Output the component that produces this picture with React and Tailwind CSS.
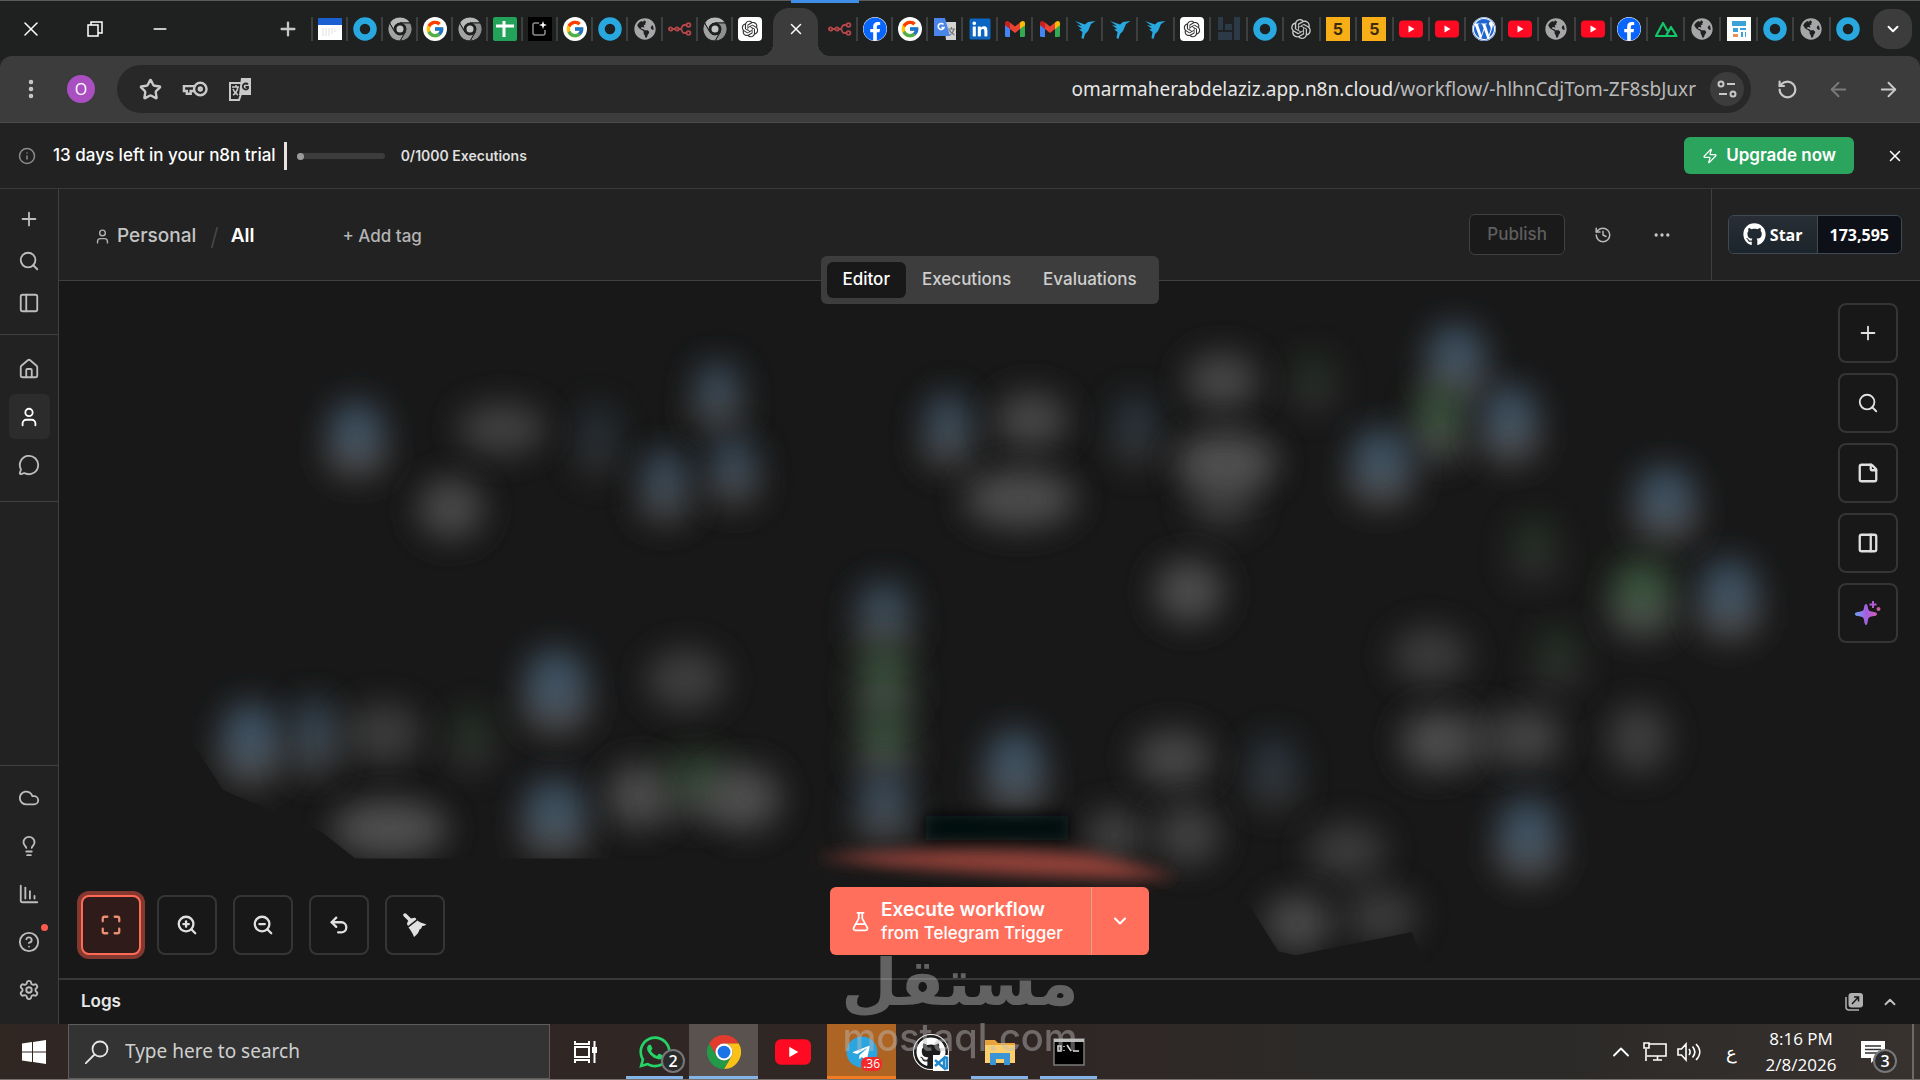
import React from "react";
import {
    ArrowLeft, ArrowRight, ChartColumnDecreasing, ChevronDown, ChevronUp, CircleHelp, Cloud, Ellipsis, EllipsisVertical,
    FlaskConical, History, House, Info, Lightbulb, Maximize, MessageCircle, Minus, PanelLeft, PanelRight, Plus,
    RotateCcw, Search, Settings, Star, StickyNote, Undo2, User, X, Zap, ZoomIn, ZoomOut,
} from "lucide-react";
import { FaFacebook, FaGithub, FaGlobeAmericas, FaLinkedin, FaTelegram, FaWhatsapp, FaWordpress } from "react-icons/fa";
import { FcGoogle } from "react-icons/fc";
import { RiOpenaiFill } from "react-icons/ri";

const UI_FONT = "font-['Inter','Liberation_Sans',sans-serif]";
const OS_FONT = "font-['Open_Sans','Noto_Sans',sans-serif]";

/* ---------- Favicons ---------- */

const Ring = () => (
    <svg viewBox="0 0 24 24" className="size-6"><circle cx="12" cy="12" r="8.5" fill="none" stroke="#29a8e0" strokeWidth="6.5" /></svg>
);

const ChromeLogo = ({ grey, className = "size-6" }) => {
    const [red, yellow, green, mid, dot] = grey
        ? ["#b8b8b8", "#8f8f8f", "#a2a2a2", "#1f2120", "#c4c4c4"]
        : ["#e33b2e", "#fbc116", "#229a48", "#ffffff", "#1b73e8"];
    return (
        <svg viewBox="0 0 48 48" className={className}>
            <g stroke={grey ? "#1f2120" : "none"} strokeWidth="2">
                <path fill={red} d="M3.2 12A24 24 0 0 1 44.8 12H24A12 12 0 0 0 13.6 30Z" />
                <path fill={yellow} d="M44.8 12A24 24 0 0 1 24 48L34.4 30A12 12 0 0 0 24 12Z" />
                <path fill={green} d="M24 48A24 24 0 0 1 3.2 12L13.6 30A12 12 0 0 0 34.4 30Z" />
            </g>
            <circle cx="24" cy="24" r="12" fill={mid} />
            <circle cx="24" cy="24" r={grey ? 7 : 9} fill={dot} />
        </svg>
    );
};

const Calendar = () => (
    <svg viewBox="0 0 24 24" className="size-6">
        <path fill="#fff" d="M0 1h24v22H0z" />
        <path fill="#1b5fd0" d="M0 1h24v7H0z" />
        <path stroke="#e3dede" strokeDasharray="2 1" d="M4 12h13M4 14h14M4 16h12M4 18h9" />
    </svg>
);

const Google = () => <span className="flex size-6 items-center justify-center rounded-full bg-white"><FcGoogle className="size-5" /></span>;

const Sheets = () => (
    <svg viewBox="0 0 24 24" className="size-6">
        <rect width="24" height="24" rx="2" fill="#23a25a" />
        <path stroke="#fff" strokeWidth="3" d="M11 4v16M3 9h18" />
    </svg>
);

const BlackApp = () => (
    <svg viewBox="0 0 24 24" className="size-6">
        <path fill="#000" d="M0 0h24v24H0z" />
        <path fill="none" stroke="#8d8d8d" strokeWidth="1.5" d="M11 6H7a2 2 0 0 0-2 2v8a2 2 0 0 0 2 2h8a2 2 0 0 0 2-2v-3" />
        <path fill="#fff" d="M15 4l1 3 3 1-3 1-1 3-1-3-3-1 3-1z" />
    </svg>
);

const Globe = () => <FaGlobeAmericas className="size-[22px] text-[#a6a6a8]" />;

const N8n = () => (
    <svg viewBox="0 0 24 24" className="size-6" fill="none" stroke="#b5474a" strokeWidth="1.8">
        <circle cx="2.6" cy="12" r="1.7" /><circle cx="9" cy="12" r="1.7" />
        <circle cx="20.5" cy="8" r="1.9" /><circle cx="20.5" cy="16" r="1.9" />
        <path d="M4.3 12h3M10.8 12h1.6c2 0 1-4 3.6-4h2.6M12.4 12c2 0 1 4 3.6 4h2.6" />
    </svg>
);

const GptCard = () => <span className="flex size-6 items-center justify-center rounded-sm bg-white"><RiOpenaiFill className="size-5 text-[#333]" /></span>;
const GptPlain = () => <RiOpenaiFill className="size-6 text-[#c9c9c9]" />;
const Facebook = () => <FaFacebook className="size-6 rounded-full bg-white text-[#0866ff]" />;

const Translate = () => (
    <svg viewBox="0 0 24 24" className="size-6">
        <path fill="#d4d4d4" d="M11 5h12v18H13z" />
        <path fill="#4a86ea" d="M1 1h11l5 18H1z" />
        <path fill="none" stroke="#fff" strokeWidth="1.6" d="M10.500 7.500a3 3 0 1 0 .5 3H8.500" />
        <path fill="none" stroke="#777" strokeWidth="1.200" d="M15 12h7M18.500 10v2M21 12c-1 4-3 5-4 6M16.500 13c1 3 3 4 5 5" />
    </svg>
);

const LinkedIn = () => <FaLinkedin className="size-6 text-[#0a66c2] [background:linear-gradient(white,white)_center/70%_70%_no-repeat]" />;

const Gmail = () => (
    <svg viewBox="0 0 24 24" className="size-6">
        <path fill="#4285f4" d="M2 7l5 4v9H3.500A1.500 1.500 0 0 1 2 18.500z" />
        <path fill="#34a853" d="M22 7l-5 4v9h3.500a1.500 1.500 0 0 0 1.500-1.500z" />
        <path fill="#ea4335" d="M7 5.500l5 4 5-4V12l-5 4-5-4z" />
        <path fill="#c5221f" d="M2 6.500C2 4 4.500 3.500 6 4.700l1 .8V12L2 8.200z" />
        <path fill="#fbbc04" d="M22 6.500c0-2.500-2.500-3-4-1.800l-1 .8V12l5-3.800z" />
    </svg>
);

const Bird = () => (
    <svg viewBox="0 0 24 24" className="size-6" fill="#29a8e0">
        <path d="M2 4l10 3.500 3-2.500 7.500-1-4.500 3-3 7-3 3-1.500 5-2-1 1-6-3.500-2.500L9 12 4 8l5 1z" />
    </svg>
);

const Bars = () => (
    <svg viewBox="0 0 24 24" className="size-6" fill="#2b3a46">
        <path d="M1 0h5v13H1zM1 15h14v8H1zM8 7h7v6H8zM17 0h6v23h-6z" />
    </svg>
);

const Five = () => <span className="flex size-6 items-center justify-center bg-[#f8ae17] text-base font-bold text-[#3d2c0c]">5</span>;

const YouTube = ({ className = "size-6" }) => (
    <svg viewBox="0 0 24 24" className={className}>
        <rect y="3.500" width="24" height="17" rx="4" fill="#ff0a23" />
        <path fill="#fff" d="M9.500 8.500l6 3.500-6 3.500z" />
    </svg>
);

const WordPress = () => <FaWordpress className="size-6 rounded-full bg-white text-[#1f66d1]" />;

const Nuxt = () => (
    <svg viewBox="0 0 24 24" className="size-6" fill="none" stroke="#12c66a" strokeWidth="2.200" strokeLinejoin="round">
        <path d="M12 19H2L9 6l4.500 8M12 19l5-9 5.500 9z" />
    </svg>
);

const WebPage = () => (
    <svg viewBox="0 0 24 24" className="size-6">
        <path fill="#fff" d="M0 0h24v24H0z" />
        <path fill="#3ba1d8" d="M5 4h14v5H5zM6 11h5v4H6zM13 11h6v2h-6zM14 15h2v5h-2zM18 15h1v5h-1z" />
        <path fill="#e0935b" d="M6 17h5v3H6z" />
    </svg>
);

const ChromeGrey = () => <ChromeLogo grey />;

const tabsLeft = [Calendar, Ring, ChromeGrey, Google, ChromeGrey, Sheets, BlackApp, Google, Ring, Globe, N8n, ChromeGrey, GptCard];
const tabsMid = [Facebook, Google, Translate, LinkedIn, Gmail, Gmail, Bird, Bird, Bird];
const tabsRight = [GptCard, Bars, Ring, GptPlain, Five, Five, YouTube, YouTube, WordPress, YouTube, Globe, YouTube, Facebook, Nuxt, Globe, WebPage, Ring, Globe, Ring];

const Tab = ({ icon: Icon, className = "w-[35px] shrink-0" }) => (
    <button aria-label="Tab" className={`flex h-6 items-center ${className}`}>
        <span className="h-6 w-0.5 bg-[#3e3f3f]" />
        <span className="flex flex-1 justify-center"><Icon /></span>
    </button>
);

/* ---------- Browser ---------- */

const TabStrip = () => (
    <div className="relative flex h-14 items-center border-t border-[#5a5c5b] bg-[#1f2120] text-white">
        <div className="absolute -top-px left-[791px] h-[3px] w-[68px] bg-[#3f8fe8]" />
        <button aria-label="Close" className="flex w-[62px] justify-center"><X className="size-6" strokeWidth={1.500} /></button>
        <button aria-label="Restore" className="flex w-[66px] justify-center">
            <svg viewBox="0 0 16 16" className="size-4" fill="none" stroke="currentColor" strokeWidth="1.500"><path d="M1 4h10v11H1zM4 4V1h11v11h-4" /></svg>
        </button>
        <button aria-label="Minimize" className="flex w-16 justify-center"><Minus className="size-5" strokeWidth={1.800} /></button>
        <button aria-label="New tab" className="ml-[85px] mr-3 text-[#c7c7c7]"><Plus className="size-[22px]" strokeWidth={2.500} /></button>
        {tabsLeft.map((icon, i) => <Tab key={i} icon={icon} />)}
        <div className="relative ml-[7px] flex h-12 w-[45px] shrink-0 items-center justify-center self-end rounded-t-2xl bg-[#3c3c3c] pb-1.5">
            <span className="absolute bottom-0 right-full size-3 bg-[radial-gradient(circle_at_0_0,transparent_12px,#3c3c3c_12px)]" />
            <span className="absolute bottom-0 left-full size-3 bg-[radial-gradient(circle_at_100%_0,transparent_12px,#3c3c3c_12px)]" />
            <button aria-label="Close tab"><X className="size-[18px]" /></button>
        </div>
        <button aria-label="Tab" className="ml-2.5 mr-1 flex w-6 shrink-0"><N8n /></button>
        {tabsMid.map((icon, i) => <Tab key={i} icon={icon} />)}
        <div className="flex min-w-0 flex-1 pl-0.5">
            {tabsRight.map((icon, i) => <Tab key={i} icon={icon} className="min-w-0 flex-1" />)}
        </div>
        <button aria-label="Search tabs" className="mx-2 flex h-10 w-[39px] shrink-0 items-center justify-center rounded-2xl bg-[#3c3c3c]"><ChevronDown className="size-[18px]" strokeWidth={2.500} /></button>
    </div>
);

const Toolbar = () => (
    <div className="bg-[#1f2120]">
        <div className="flex h-[67px] items-center rounded-t-xl border-b border-[#4a4a4a] bg-[#3c3c3c] text-[#c9c9c9]">
            <button aria-label="Menu" className="flex w-[62px] justify-center"><EllipsisVertical className="size-6" strokeWidth={2.500} /></button>
            <button aria-label="Profile" className={`mr-[22px] ml-[5px] flex size-7 items-center justify-center rounded-full bg-[#a94fc2] text-base text-white ${OS_FONT}`}>O</button>
            <div className="flex h-12 flex-1 items-center rounded-full bg-[#282828] pl-[22px] pr-[7px]">
                <button aria-label="Bookmark" className="mr-5"><Star className="size-[23px]" strokeWidth={2.500} /></button>
                <button aria-label="Passwords" className="mr-5">
                    <svg viewBox="0 0 27 18" className="h-[18px] w-[26px]" fill="none" stroke="currentColor" strokeWidth="2.500">
                        <circle cx="19" cy="9" r="6.500" /><circle cx="19" cy="9" r="1.500" />
                        <path d="M13 6H2v5h3v3h4v-3h4" />
                    </svg>
                </button>
                <button aria-label="Translate page">
                    <svg viewBox="0 0 24 24" className="size-6">
                        <path fill="#c9c9c9" d="M13 1h10v17H11z" />
                        <path fill="none" stroke="#c9c9c9" strokeWidth="2" d="M13 6H2v17h9l2-6" />
                        <path fill="none" stroke="#c9c9c9" strokeWidth="1.500" d="M4 10h7M8 8v2M10 10c-1 5-3 7-5 8M5 12c1 3 3 5 5 6" />
                        <path fill="none" stroke="#282828" strokeWidth="1.800" d="M20 7.500a3 3 0 1 0 0 4V10h-2.500" />
                    </svg>
                </button>
                <p className="ml-auto font-['Noto_Sans','Open_Sans',sans-serif] text-[19px] text-[#b9b9b9]">
                    <span className="text-[#e6e6e6]">omarmaherabdelaziz.app.n8n.cloud</span>/workflow/-hlhnCdjTom-ZF8sbJuxr
                </p>
                <button aria-label="Site information" className="ml-3.5 flex size-[34px] items-center justify-center rounded-full bg-[#3c3c3c]">
                    <svg viewBox="0 0 20 20" className="size-5" fill="none" stroke="currentColor" strokeWidth="2"><circle cx="4" cy="5" r="2.500" /><circle cx="16" cy="15" r="2.500" /><path d="M10 5h8M2 15h8" /></svg>
                </button>
            </div>
            <button aria-label="Reload" className="ml-[26px]"><RotateCcw className="size-[21px]" strokeWidth={2.500} /></button>
            <button aria-label="Forward" className="ml-[29px] text-[#7a7a7a]"><ArrowLeft className="size-[23px]" /></button>
            <button aria-label="Back" className="ml-[27px] mr-5"><ArrowRight className="size-[23px]" /></button>
        </div>
    </div>
);

/* ---------- n8n ---------- */

const TrialBanner = () => (
    <div className="flex h-[66px] items-center border-b border-[#3a3a3a] bg-[#222222] text-white">
        <Info className="ml-[18px] size-[18px] text-[#8c8c8c]" />
        <p className="ml-[17px] text-[17px] font-medium">13 days left in your n8n trial</p>
        <span className="ml-2 h-7 w-[3px] bg-[#e8e3dd]" />
        <div role="progressbar" aria-label="Executions used" aria-valuenow={0} aria-valuemax={1000} className="ml-2.5 h-1.5 w-22 rounded-full bg-[#3c3c3c]">
            <span className="block size-[7px] rounded-full bg-[#9b9b9b]" />
        </div>
        <p className="ml-4 text-sm font-semibold text-[#dedede]">0/1000 Executions</p>
        <button className="ml-auto flex h-[37px] items-center gap-2 rounded-md bg-[#2ba45e] px-[18px] text-[17px] font-semibold">
            <Zap className="size-4" strokeWidth={1.800} />
            Upgrade now
        </button>
        <button aria-label="Dismiss" className="ml-8 mr-4"><X className="size-[18px]" /></button>
    </div>
);

const SideButton = ({ icon: Icon, label, active, dot, className = "h-[45px]" }) => (
    <button aria-label={label} className={`relative flex w-[41px] items-center justify-center rounded-md ${className} ${active ? "bg-[#2c2c2c] text-white" : "text-[#bdbdbd]"}`}>
        <Icon className="size-[22px]" strokeWidth={2} />
        {dot && <span className="absolute right-[2px] top-[5px] size-[7px] rounded-full bg-[#ff5a4d]" />}
    </button>
);

const Sidebar = () => (
    <aside className="flex w-[59px] shrink-0 flex-col border-r border-[#404040] bg-[#222222]">
        <div className="flex h-[146px] flex-col items-center border-b border-[#404040] pt-[9px]">
            <SideButton icon={Plus} label="Create" className="h-[42px]" />
            <SideButton icon={Search} label="Search" className="h-[42px]" />
            <SideButton icon={PanelLeft} label="Toggle sidebar" className="h-[42px]" />
        </div>
        <div className="flex h-[167px] flex-col items-center gap-[3px] border-b border-[#404040] pt-[11px]">
            <SideButton icon={House} label="Overview" />
            <SideButton icon={User} label="Personal" active />
            <SideButton icon={MessageCircle} label="Chat" />
        </div>
        <div className="mt-auto flex flex-col items-center gap-[3px] border-t border-[#404040] pb-3 pt-[9px]">
            <SideButton icon={Cloud} label="Admin panel" />
            <SideButton icon={Lightbulb} label="Templates" />
            <SideButton icon={ChartColumnDecreasing} label="Insights" />
            <SideButton icon={CircleHelp} label="Help" dot />
            <SideButton icon={Settings} label="Settings" />
        </div>
    </aside>
);

const Header = () => (
    <header className="relative z-10 flex h-[92px] items-stretch border-b border-[#404040] bg-[#222222]">
        <div className="flex items-center pt-1">
            <User className="ml-[35px] size-[17px] text-[#b0b0b0]" />
            <a href="#personal" className="ml-1.5 text-[19px] font-medium text-[#c4c4c4]">Personal</a>
            <span className="ml-3.5 text-2xl font-light text-[#4a4a4a]">/</span>
            <span className="ml-3 text-[19px] font-semibold text-white">All</span>
            <button className="ml-[88px] text-[17px] font-medium text-[#b4b4b4]">+ Add tag</button>
        </div>

        <div className="ml-auto flex items-center pr-[39px]">
            <button disabled className="h-[41px] rounded-md border border-[#404040] bg-[#1a1a1a] px-[17px] text-[17px] font-medium text-[#5f5f5f]">Publish</button>
            <button aria-label="History" className="ml-[29px] text-[#b8b8b8]"><History className="size-[18px]" /></button>
            <button aria-label="More" className="ml-10 text-[#c8c8c8]"><Ellipsis className="size-5" strokeWidth={2} /></button>
        </div>
        <div className="flex items-center border-l border-[#404040] pl-4 pr-[18px]">
            <a href="#github" className={`flex h-[39px] items-stretch overflow-hidden rounded-md border border-[#3f4a54] font-bold text-white ${OS_FONT}`}>
                <span className="flex items-center gap-1 border-r border-[#3f4a54] bg-gradient-to-b from-[#272e35] to-[#1d252c] px-[14px] text-base"><FaGithub className="size-[23px]" />Star</span>
                <span className="flex items-center bg-[#0d1117] px-3 text-base">173,595</span>
            </a>
        </div>

        <nav className="absolute bottom-0 left-1/2 flex -translate-x-1/2 translate-y-1/2 rounded-md bg-[#3d3d3d] p-1.5 text-[17px] font-medium text-[#cfcfcf]">
            <button className="h-9 rounded-md bg-[#181818] px-4 text-white">Editor</button>
            <button className="h-9 px-4">Executions</button>
            <button className="h-9 px-4">Evaluations</button>
        </nav>
    </header>
);

const BLUE = "#42586a";
const GREEN = "#3c5a3f";
const GREY = "#5c5c5c";

/* x, y, rx, ry, tint, strength */
const nodes = [
    [291, 357, 26, 28, BLUE, 1], [410, 350, 36, 21, GREY, 0.7], [368, 415, 27, 25, GREY, 0.85], [488, 358, 20, 28, BLUE, 0.4],
    [586, 322, 22, 25, BLUE, 0.9], [543, 395, 23, 27, BLUE, 0.9], [599, 383, 23, 25, BLUE, 0.9],
    [774, 350, 23, 28, BLUE, 0.9], [842, 343, 30, 23, GREY, 0.8], [833, 407, 46, 24, GREY, 0.9], [927, 350, 21, 27, BLUE, 0.5],
    [998, 311, 30, 23, GREY, 0.8], [1073, 311, 21, 20, GREEN, 0.4], [1001, 378, 42, 26, GREY, 0.95], [998, 408, 27, 25, GREY, 0.5], [971, 483, 28, 26, GREY, 0.9],
    [1189, 295, 27, 29, BLUE, 1], [1175, 344, 23, 28, GREEN, 0.95], [1233, 345, 26, 29, BLUE, 1], [1128, 380, 28, 29, BLUE, 1],
    [1360, 410, 28, 28, BLUE, 1], [1253, 447, 22, 23, GREEN, 0.4], [1341, 487, 28, 28, GREEN, 1], [1412, 488, 27, 30, BLUE, 1],
    [1168, 535, 32, 23, GREY, 0.6], [1272, 537, 22, 23, GREEN, 0.4], [1172, 606, 28, 25, GREY, 0.9], [1210, 604, 30, 22, GREY, 0.5], [1250, 602, 25, 24, GREY, 0.75],
    [1338, 603, 25, 28, GREY, 0.65], [1248, 684, 28, 31, BLUE, 1],
    [722, 502, 25, 26, BLUE, 0.9], [722, 555, 24, 28, GREEN, 0.9], [722, 605, 24, 27, GREEN, 0.9], [722, 658, 25, 26, BLUE, 0.9],
    [829, 628, 27, 31, BLUE, 1], [958, 619, 32, 23, GREY, 0.8], [1040, 630, 23, 27, BLUE, 0.5], [910, 682, 24, 22, GREY, 0.7], [970, 682, 27, 25, GREY, 0.7],
    [1100, 695, 32, 23, GREY, 0.6], [1060, 754, 28, 24, GREY, 0.85], [1128, 748, 30, 23, GREY, 0.6],
    [205, 606, 28, 31, BLUE, 1], [257, 601, 22, 29, BLUE, 0.8], [313, 599, 32, 25, GREY, 0.6], [385, 603, 22, 23, GREEN, 0.4],
    [454, 563, 29, 32, BLUE, 1], [560, 555, 32, 25, GREY, 0.65], [453, 667, 29, 29, BLUE, 1],
    [522, 650, 27, 27, GREY, 0.9], [570, 641, 30, 23, GREEN, 0.8], [608, 652, 30, 27, GREY, 0.9], [318, 677, 48, 24, GREY, 0.95],
];

const WorkflowNodes = () => (
    <svg aria-hidden="true" viewBox="48 229 1520 570" preserveAspectRatio="xMidYMid slice" className="absolute inset-0 size-full">
        <defs>
            <filter id="soft" x="-100%" y="-100%" width="300%" height="300%"><feGaussianBlur stdDeviation="13" /></filter>
            <filter id="edge" x="-20%" y="-100%" width="140%" height="300%"><feGaussianBlur stdDeviation="6" /></filter>
            <clipPath id="cut"><path d="M48 229h1520v570h-400l-15-38-95 19-14-3-24-38H668l-30-31h-30l-35 2-85-9H290l-28-22-80-34-26-40H48z" /></clipPath>
        </defs>
        <g clipPath="url(#cut)">
            {nodes.map(([x, y, rx, ry, tint, strength], i) => (
                <g key={i} filter="url(#soft)" opacity={strength}>
                    {tint !== GREY && <ellipse cx={x} cy={y + 13} rx={rx} ry={ry - 7} fill="#505050" opacity="0.9" />}
                    <ellipse cx={x} cy={tint === GREY ? y : y - 8} rx={tint === GREY ? rx : rx - 3} ry={tint === GREY ? ry : ry - 6} fill={tint} opacity="0.85" />
                </g>
            ))}
        </g>
        <path filter="url(#edge)" fill="#020d11" d="M756 666h116v20H756z" />
        <path filter="url(#edge)" fill="#8f4039" d="M666 700c80-8 180-8 230-2l66 18c-60 4-150-2-230-8z" />
    </svg>
);

const canvasButton = "flex size-[60px] items-center justify-center rounded-lg border-2 border-[#353535] bg-[#181818] text-[#e0e0e0]";

const AiSparkle = () => (
    <svg viewBox="0 0 26 26" className="size-[26px]">
        <defs><linearGradient id="ai" x1="0" x2="1"><stop stopColor="#6aa5f4" /><stop offset=".5" stopColor="#a45fe0" /><stop offset="1" stopColor="#d35bb6" /></linearGradient></defs>
        <path fill="url(#ai)" d="M11 4c1 0 1.600 1 2 4 .5 2.500 1 3 3.500 3.500 4 .6 5.500 1 5.500 2.500s-1.500 2-5.500 2.500C14 17 13.500 17.500 13 20c-.4 3-1 5-2 5s-1.600-2-2-5c-.5-2.500-1-3-3.500-3.500C1.500 16 0 15.500 0 14s1.500-1.900 5.500-2.500C8 11 8.500 10.500 9 8c.4-3 1-4 2-4z" />
        <path fill="none" stroke="#b45bd6" strokeWidth="2" d="M18 1v7M14.500 4.500h7" />
        <circle cx="23.500" cy="9" r="2" fill="#c65a9c" />
    </svg>
);

const Broom = () => (
    <svg viewBox="0 0 24 24" className="size-6" fill="currentColor">
        <path stroke="currentColor" strokeWidth="3.500" strokeLinecap="round" d="M2 2l6 6" />
        <path d="M4 11c0-3 5-7 8.500-6l.8 1.500L5 13z" />
        <path d="M5.500 14.500L14.500 7.500c2 2 5 2.500 9 4-2 1.500-3 1.500-4.500 1.500 0 2-1 3-2.500 3.500-.5 3-2.500 5-5.500 7.500-1.500-4-3-6.500-5.500-9.500z" />
    </svg>
);

const Canvas = () => (
    <section className="relative flex flex-1 flex-col justify-between overflow-hidden bg-[#181818] pt-[22px] pb-[23px] pl-[22px] pr-[22px]">
        <WorkflowNodes />
        <div className="relative flex flex-col gap-2.5 self-end">
            <button aria-label="Add node" className={canvasButton}><Plus className="size-[22px]" /></button>
            <button aria-label="Find node" className={canvasButton}><Search className="size-[22px]" /></button>
            <button aria-label="Add sticky note" className={canvasButton}><StickyNote className="size-[22px]" strokeWidth={2.500} /></button>
            <button aria-label="Toggle panel" className={canvasButton}><PanelRight className="size-[22px]" strokeWidth={2.500} /></button>
            <button aria-label="Ask assistant" className={canvasButton}><AiSparkle /></button>
        </div>
        <div className="relative grid grid-cols-[1fr_auto_1fr] items-end">
            <div className="flex gap-4">
                <button aria-label="Fit view" className="flex size-[60px] items-center justify-center rounded-lg border-2 border-[#ff6a57] bg-[#2e1b1a] text-[#e8906f] ring-4 ring-[#85382f]"><Maximize className="size-[22px]" strokeWidth={2.500} /></button>
                <button aria-label="Zoom in" className={canvasButton}><ZoomIn className="size-[22px]" strokeWidth={2.500} /></button>
                <button aria-label="Zoom out" className={canvasButton}><ZoomOut className="size-[22px]" strokeWidth={2.500} /></button>
                <button aria-label="Reset zoom" className={canvasButton}><Undo2 className="size-[22px]" strokeWidth={2.500} /></button>
                <button aria-label="Tidy up" className={canvasButton}><Broom /></button>
            </div>
            <div className="flex h-[68px] overflow-hidden rounded-md bg-[#ff6f5c] text-white">
                <button className="flex items-center gap-2.5 border-r border-[#d9a58f] pl-5 pr-7 text-left">
                    <FlaskConical className="size-[21px]" strokeWidth={2} />
                    <span>
                        <span className="block text-[19px] leading-6 font-semibold">Execute workflow</span>
                        <span className="block text-[17px] leading-[22px] font-medium">from Telegram Trigger</span>
                    </span>
                </button>
                <button aria-label="Choose trigger" className="flex w-[57px] items-center justify-center"><ChevronDown className="size-5" strokeWidth={2.500} /></button>
            </div>
        </div>
    </section>
);

const Logs = () => (
    <footer className="flex h-[46px] items-center border-t-2 border-[#383838] bg-[#181818] pl-[22px] pr-[21px]">
        <h2 className="text-[17px] font-semibold text-[#e8e8e8]">Logs</h2>
        <button aria-label="Pop out" className="ml-auto">
            <svg viewBox="0 0 18 18" className="size-[18px]">
                <rect x="3.500" y="0" width="14.500" height="14.500" rx="3" fill="#b0b0b0" />
                <path fill="none" stroke="#b0b0b0" strokeWidth="1.500" d="M1 4v10a3 3 0 0 0 3 3h10" />
                <path fill="none" stroke="#181818" strokeWidth="1.500" d="M7 11l6-6.500M9 4h4.500v4.500" />
            </svg>
        </button>
        <button aria-label="Expand logs" className="ml-[18px] text-[#c0c0c0]"><ChevronUp className="size-[18px]" strokeWidth={2.500} /></button>
    </footer>
);

/* ---------- Taskbar ---------- */

const TaskbarApp = ({ label, active = "", underline, children }) => (
    <button aria-label={label} className={`relative flex h-full w-[69px] items-center justify-center ${active}`}>
        {children}
        {underline && <span className={`absolute bottom-0 h-[3px] ${underline}`} />}
    </button>
);

const Taskbar = () => (
    <div className={`flex h-14 items-center border-b border-[#76706c] bg-[linear-gradient(90deg,#302723,#302725_55%,#2b2a28_70%,#2c2a28_82%,#38322f)] text-white ${OS_FONT}`}>
        <button aria-label="Start" className="flex w-[68px] justify-center">
            <svg viewBox="0 0 24 24" className="size-6" fill="#fff"><path d="M0 3.500l10-1.400v9.500H0zM11 2l13-2v11.600H11zM0 12.500h10v9.500L0 20.600zM11 12.500h13V24l-13-1.900z" /></svg>
        </button>
        <label className="flex h-full w-[482px] items-center gap-4 border border-[#5d5d5d] bg-[#333333] pl-4">
            <svg viewBox="0 0 24 24" className="size-6 shrink-0" fill="none" stroke="#e6e6e6" strokeWidth="1.800"><circle cx="15" cy="9" r="7.500" /><path d="M9.500 14.500L0 24" /></svg>
            <input aria-label="Search Windows" placeholder="Type here to search" className="w-full bg-transparent font-['Noto_Sans','Open_Sans',sans-serif] text-[19px] outline-none placeholder:text-[#cfcfcf]" />
        </label>
        <button aria-label="Task view" className="flex w-[70px] justify-center">
            <svg viewBox="0 0 24 24" className="size-6" fill="none" stroke="#fff" strokeWidth="2"><path d="M2 1v3h14V1M2 7h14v10H2zM2 23v-3h14v3M21.500 1v22" /><path fill="#fff" d="M20 8h3v4h-3z" /></svg>
        </button>
        <TaskbarApp label="WhatsApp" underline="inset-x-1.5 bg-[#83b4e8]">
            <FaWhatsapp className="size-9 text-[#25d366]" />
            <span className="absolute bottom-1.5 right-1 flex size-6 items-center justify-center rounded-full border-2 border-[#777] bg-[#2b2b2b] text-base font-semibold">2</span>
        </TaskbarApp>
        <TaskbarApp label="Chrome" active="bg-[#59524e]" underline="inset-x-0 bg-[#83b4e8]"><ChromeLogo className="size-[34px]" /></TaskbarApp>
        <TaskbarApp label="YouTube"><YouTube className="size-9" /></TaskbarApp>
        <TaskbarApp label="Telegram" active="bg-[#ae6423]" underline="inset-x-0 bg-[#f07b22]">
            <FaTelegram className="size-8 text-[#2ba5e0] [background:linear-gradient(white,white)_center/60%_60%_no-repeat]" />
            <span className="absolute bottom-2 right-3.5 rounded-md bg-[#f22a2a] px-0.5 text-xs leading-[14px]">.36</span>
        </TaskbarApp>
        <TaskbarApp label="GitHub">
            <FaGithub className="size-[34px] rounded-full border-2 border-[#1c1c1c] bg-[#1c1c1c] text-white ring-1 ring-white" />
            <svg viewBox="0 0 16 16" className="absolute bottom-2 right-4 size-4"><path fill="#fff" d="M0 0h16v16H0z" /><path fill="none" stroke="#2489ca" strokeWidth="2.500" d="M2 5l9 8V3L2 11M11 2l3 1v10l-3 1" /></svg>
        </TaskbarApp>
        <TaskbarApp label="File Explorer" underline="inset-x-1.5 bg-[#83b4e8]">
            <svg viewBox="0 0 32 28" className="h-7 w-8"><path fill="#e8a33d" d="M1 2h10l3 3h17v10H1z" /><path fill="#fbd06c" d="M1 7h30v18H1z" /><path fill="#3b94d4" d="M6 27V15h20v12h-6v-6h-8v6z" /></svg>
        </TaskbarApp>
        <TaskbarApp label="Command Prompt" underline="inset-x-1.5 bg-[#83b4e8]">
            <svg viewBox="0 0 32 28" className="h-7 w-8"><path fill="#000" stroke="#7b7b7b" strokeWidth="1.500" d="M1 1h30v26H1z" /><path fill="#bcbcbc" d="M1 1h30v3H1z" /><path fill="none" stroke="#ddd" strokeWidth="1.500" d="M5 8h3v5H5zM11 8v1M11 12v1M14 7l4 6M20 13h6" /></svg>
        </TaskbarApp>

        <div className="ml-auto flex h-full items-center">
            <button aria-label="Show hidden icons"><ChevronUp className="size-7" strokeWidth={1.600} /></button>
            <svg viewBox="0 0 24 20" className="ml-2 h-5 w-6" fill="none" stroke="#fff" strokeWidth="1.600"><path d="M6 2h17v12H4M10 18h9M14.500 14v4M3 7v12" /><path d="M1 1h5v5H1z" /></svg>
            <svg viewBox="0 0 24 20" className="ml-2.5 h-5 w-6" fill="none" stroke="#fff" strokeWidth="1.600"><path d="M1 7h3.500L9 2v16l-4.500-5H1zM12 7c1.500 2 1.500 4 0 6M15.500 4.500c3 3.500 3 7.500 0 11M19 2c5 5 5 11 0 16" /></svg>
            <span className="ml-5 w-5 text-center text-lg">ع</span>
            <p className="ml-6 flex w-[72px] flex-col items-center text-[17px] leading-[26px] whitespace-nowrap"><span>8:16 PM</span><span>2/8/2026</span></p>
            <button aria-label="Notifications" className="relative ml-6 mr-[15px] flex h-full w-9 items-center">
                <svg viewBox="0 0 24 24" className="size-6"><path fill="#fff" d="M0 1h24v17h-9l-5 5v-5H0z" /><path stroke="#333" strokeWidth="1.500" d="M4 6h16M4 9.500h16M4 13h12" /></svg>
                <span className="absolute bottom-1.5 right-0 flex size-6 items-center justify-center rounded-full border-2 border-[#777] bg-[#2e2c2b] text-base font-semibold">3</span>
            </button>
            <span className="mr-1.5 h-full w-0.5 bg-[#6e6966]" />
        </div>
    </div>
);

const Watermark = () => (
    <div aria-hidden="true" className="pointer-events-none absolute bottom-0 left-1/2 z-20 h-[133px] w-60 -translate-x-1/2 text-center text-[#bdbdbd] opacity-45">
        <p dir="rtl" className="font-['DejaVu_Sans',sans-serif] text-[65px] leading-[72px] font-bold">مستقل</p>
        <p className="font-['Inter',sans-serif] text-[38px] leading-9 font-medium">mostaql.com</p>
    </div>
);

const App = () => {
    return (
        <div className={`relative flex min-h-screen flex-col overflow-hidden bg-[#181818] ${UI_FONT}`}>
            <TabStrip />
            <Toolbar />
            <TrialBanner />
            <div className="flex flex-1">
                <Sidebar />
                <main className="flex min-w-0 flex-1 flex-col">
                    <Header />
                    <Canvas />
                    <Logs />
                </main>
            </div>
            <Taskbar />
            <Watermark />
        </div>
    );
};

export default App;
